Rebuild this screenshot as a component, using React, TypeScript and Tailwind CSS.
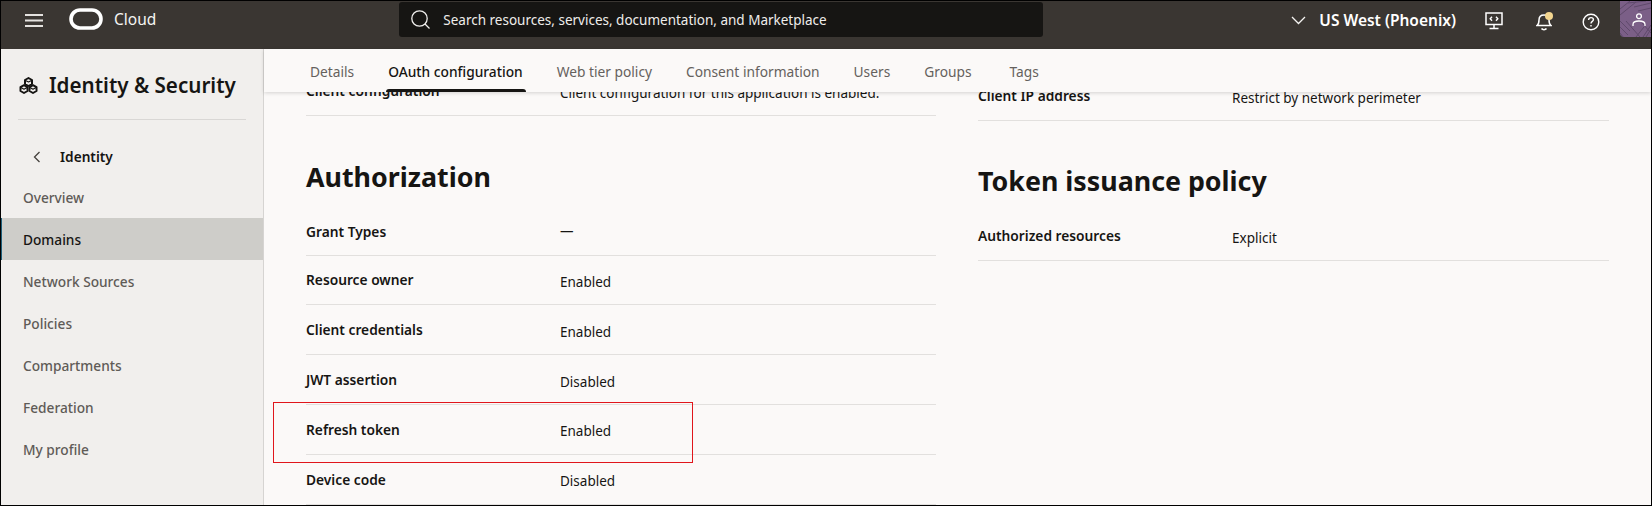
import React from "react";

const font = { fontFamily: '"Noto Sans", sans-serif' };

function Row({ label, value, h = "h-[49.8px]", className = "", valueClass = "pt-[4px]", labelClass = "pt-[1px]" }: { label: string; value: string; h?: string; className?: string; valueClass?: string; labelClass?: string }) {
  return (
    <div className={`flex items-center border-b border-[#e2e0de] ${h} ${className}`}>
      <div className={`w-[254px] shrink-0 text-[13.75px] font-semibold text-[#161513] leading-5 whitespace-nowrap ${labelClass}`}>{label}</div>
      <div className={`text-[13.5px] text-[#161513] leading-5 whitespace-nowrap ${valueClass}`}>{value}</div>
    </div>
  );
}

function Tab({ children, active, className = "" }: { children: React.ReactNode; active?: boolean; className?: string }) {
  return (
    <div className={`relative h-full flex items-center pt-[4px] whitespace-nowrap text-[13.75px] ${active ? "font-medium text-[#161513]" : "text-[#65615d]"} ${className}`}>
      {children}
      {active && <div className="absolute -left-[2px] -right-[3px] bottom-0 h-[3px] rounded-t-[3px] bg-[#161513]" />}
    </div>
  );
}

function NavItem({ children, active }: { children: React.ReactNode; active?: boolean }) {
  return (
    <div
      className={
        active
          ? "h-[42px] flex items-center pt-[2px] pl-[21px] text-[13.7px] bg-[#cecdc9] border-l border-[#1f5f7a] font-medium text-[#161513]"
          : "h-[42px] flex items-center pt-[2px] pl-[22px] text-[13.7px] text-[#5f5b57] font-medium"
      }
    >
      {children}
    </div>
  );
}

function Logo() {
  return (
    <svg width="34" height="22" viewBox="0 0 34 22" fill="none" className="shrink-0">
      <rect x="2" y="2" width="30" height="18" rx="9" stroke="#fff" strokeWidth="3.6" />
    </svg>
  );
}

function StackIcon() {
  return (
    <svg width="19" height="17" viewBox="0 0 19 17" fill="none" stroke="#161513" strokeWidth="2" strokeLinejoin="round" className="shrink-0">
      <path d="M9.5 1 L13 3 V7 L9.5 9 L6 7 V3 Z" />
      <path d="M5 8.2 L8.5 10.2 V14 L5 16 L1.5 14 V10.2 Z" />
      <path d="M14 8.2 L17.5 10.2 V14 L14 16 L10.5 14 V10.2 Z" />
      <path d="M6 3.2 L9.5 5 L13 3.2 M1.5 10.3 L5 12.2 L8.5 10.3 M10.5 10.3 L14 12.2 L17.5 10.3" strokeWidth="1.2" />
    </svg>
  );
}

function Avatar() {
  return (
    <div className="relative w-[31px] h-[36px] bg-[#7b5f87] rounded-bl-[4px] overflow-hidden shrink-0">
      <svg width="31" height="36" viewBox="0 0 31 36" fill="none" stroke="#5f4a6b" strokeWidth="1" className="absolute inset-0">
        <path d="M0 8 L10 0 M0 14 L16 1 M8 2 L26 0 M14 6 L31 2 M18 10 L31 7 M0 20 L10 30 M0 26 L8 34 M0 32 L3 36 M6 20 L20 36 M22 22 L31 32 M24 26 L16 36 M31 24 L23 36 M31 28 L26 36" />
      </svg>
      <svg width="14" height="14" viewBox="0 0 14 14" fill="none" stroke="#fff" strokeWidth="1.3" className="absolute left-[12px] top-[12px]">
        <circle cx="7" cy="3.2" r="2.4" />
        <path d="M1 13 V11.5 C1 9 3.5 8 7 8 C10.5 8 13 9 13 11.5 V13" />
      </svg>
    </div>
  );
}

export default function App() {
  return (
    <div style={font} className="relative w-[1652px] h-[506px] border border-black overflow-hidden flex flex-col bg-[#fbf9f8]">
      <header className="h-[48px] shrink-0 bg-[#3a3632] flex items-start text-white">
        <svg width="18" height="13" viewBox="0 0 18 13" fill="none" stroke="#e4e2df" strokeWidth="1.8" className="ml-[24px] mt-[13px] shrink-0">
          <path d="M0 1 H18 M0 6.5 H18 M0 12 H18" />
        </svg>
        <div className="ml-[26px] mt-[7px]"><Logo /></div>
        <div className="ml-[11px] mt-[6px] text-[15.5px] leading-6 text-[#f5f4f2]">Cloud</div>
        <div className="ml-[243px] mt-[1px] w-[644px] h-[35px] rounded-[3px] bg-[#161513] flex items-center shrink-0">
          <svg width="19" height="19" viewBox="0 0 19 19" fill="none" stroke="#f0efed" strokeWidth="1.3" className="ml-[12px] shrink-0">
            <circle cx="8.5" cy="8.5" r="7.7" />
            <path d="M14 14 L18.5 18.5" />
          </svg>
          <span className="ml-[13px] pt-[1px] text-[13.5px] text-[#efedeb] whitespace-nowrap">Search resources, services, documentation, and Marketplace</span>
        </div>
        <svg width="15" height="9" viewBox="0 0 15 9" fill="none" stroke="#f5f4f2" strokeWidth="1.3" className="ml-[248px] mt-[15px] shrink-0">
          <path d="M1 1 L7.5 7.5 L14 1" />
        </svg>
        <div className="ml-[13px] mt-[7px] text-[15.5px] leading-6 font-semibold whitespace-nowrap w-[137px]">US West (Phoenix)</div>
        <svg width="18" height="18" viewBox="0 0 18 18" fill="none" stroke="#fff" strokeWidth="1.5" className="ml-[29px] mt-[11px] shrink-0">
          <rect x="1" y="1" width="16" height="11.5" />
          <path d="M9 12.5 V16.5 M4.5 16.5 H13.5" />
          <path d="M7 4.7 L5.2 6.7 L7 8.7 M11 4.7 L12.8 6.7 L11 8.7" strokeWidth="1.4" />
        </svg>
        <div className="relative ml-[33px] mt-[11px] w-[16px] h-[19px] shrink-0">
          <svg width="16" height="19" viewBox="0 0 16 19" fill="none" stroke="#fff" strokeWidth="1.5">
            <path d="M1 13.5 C3 12 3 10.5 3 8 C3 5 5 3 8 3 C11 3 13 5 13 8 C13 10.5 13 12 15 13.5 Z" />
            <path d="M5.5 16.5 C6.5 18 9.5 18 10.5 16.5" />
          </svg>
          <div className="absolute right-[-1px] top-0 w-[8px] h-[8px] rounded-full bg-[#f4d68f]" />
        </div>
        <svg width="18" height="18" viewBox="0 0 18 18" fill="none" stroke="#fff" strokeWidth="1.4" className="ml-[30px] mt-[12px] shrink-0">
          <circle cx="9" cy="9" r="7.8" />
          <path d="M6.6 7 C6.6 5.4 7.7 4.6 9 4.6 C10.4 4.6 11.4 5.5 11.4 6.7 C11.4 8.3 9 8.5 9 10.5" />
          <path d="M9 12 V13.5" />
        </svg>
        <div className="ml-auto"><Avatar /></div>
      </header>

      <div className="flex-1 min-h-0 flex">
        <aside className="w-[263px] shrink-0 border-r border-[#d6d4d2] bg-[#f1efed] flex flex-col">
          <div className="h-[71px] mx-[17px] border-b border-[#d9d7d5] flex items-center gap-[11px] pl-[1px] pt-[2px]">
            <StackIcon />
            <span className="text-[20.6px] font-semibold text-[#161513] whitespace-nowrap">Identity &amp; Security</span>
          </div>
          <div className="h-[56px] flex items-center pl-[32px] pt-[18px]">
            <svg width="8" height="12" viewBox="0 0 8 12" fill="none" stroke="#45413d" strokeWidth="1.3" className="shrink-0">
              <path d="M6.5 1 L1.5 6 L6.5 11" />
            </svg>
            <span className="ml-[19px] text-[13.7px] font-semibold text-[#161513]">Identity</span>
          </div>
          <NavItem>Overview</NavItem>
          <NavItem active>Domains</NavItem>
          <NavItem>Network Sources</NavItem>
          <NavItem>Policies</NavItem>
          <NavItem>Compartments</NavItem>
          <NavItem>Federation</NavItem>
          <NavItem>My profile</NavItem>
        </aside>

        <main className="relative flex-1 min-w-0 flex flex-col">
          <div className="relative z-10 h-[43px] shrink-0 bg-[#fbf9f8] shadow-[0_1px_4px_rgba(0,0,0,0.16)] flex items-center gap-[34px] pl-[46px]">
            <Tab>Details</Tab>
            <Tab active>OAuth configuration</Tab>
            <Tab>Web tier policy</Tab>
            <Tab>Consent information</Tab>
            <Tab>Users</Tab>
            <Tab>Groups</Tab>
            <Tab className="ml-[4px]">Tags</Tab>
          </div>

          <div className="flex-1 min-h-0 overflow-hidden flex pl-[42px] gap-[42px]">
            <section className="w-[630px] shrink-0">
              <Row label="Client configuration" value="Client configuration for this application is enabled." className="-mt-[25.8px]" />
              <h2 className="h-[91.6px] pt-[43px] text-[26.8px] leading-9 font-bold text-[#161513]">Authorization</h2>
              <Row label="Grant Types" value="—" h="h-[48px]" valueClass="pt-0" />
              <Row label="Resource owner" value="Enabled" />
              <Row label="Client credentials" value="Enabled" />
              <Row label="JWT assertion" value="Disabled" />
              <Row label="Refresh token" value="Enabled" />
              <Row label="Device code" value="Disabled" />
            </section>
            <section className="w-[630.5px] shrink-0">
              <Row label="Client IP address" value="Restrict by network perimeter" className="-mt-[20.4px]" labelClass="pb-[1px]" />
              <h2 className="h-[89.8px] pt-[41.5px] text-[26.8px] leading-9 font-bold text-[#161513]">Token issuance policy</h2>
              <Row label="Authorized resources" value="Explicit" />
            </section>
          </div>
        </main>
      </div>

      <div className="absolute left-[272px] top-[401px] w-[420px] h-[61px] border border-[#e0161c] pointer-events-none" />
    </div>
  );
}
